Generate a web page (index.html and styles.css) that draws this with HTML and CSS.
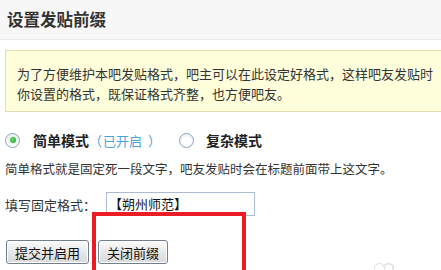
FILE: index.html
```html
<!DOCTYPE html>
<html lang="zh-CN">
<head>
<meta charset="utf-8">
<title>设置发贴前缀</title>
<link rel="stylesheet" href="styles.css">
</head>
<body>
<div class="page">
  <div class="header">设置发贴前缀</div>
  <div class="notice">
    <p>为了方便维护本吧发贴格式，吧主可以在此设定好格式，这样吧友发贴时</p>
    <p>你设置的格式，既保证格式齐整，也方便吧友。</p>
  </div>
  <div class="modes">
    <span class="radio checked"></span>
    <span class="mode-name">简单模式</span><span class="status"><span class="paren-l">（</span>已开启<span class="paren-r">）</span></span>
    <span class="radio second"></span>
    <span class="mode-name">复杂模式</span>
  </div>
  <div class="desc">简单格式就是固定死一段文字，吧友发贴时会在标题前面带上这文字。</div>
  <div class="field">
    <span class="label">填写固定格式：</span>
    <div class="input">【朔州师范】</div>
  </div>
  <div class="buttons">
    <button class="btn btn-submit">提交并启用</button>
    <button class="btn btn-close">关闭前缀</button>
  </div>
  <div class="highlight"></div>
  <div class="watermark"></div>
</div>
</body>
</html>
```
FILE: styles.css
```css
html, body {
  margin: 0;
  padding: 0;
  background: #ffffff;
  overflow: hidden;
}
.page {
  position: relative;
  width: 441px;
  height: 270px;
  overflow: hidden;
  font-family: "Noto Sans CJK SC", "DejaVu Sans", sans-serif;
  font-size: 12.5px;
  color: #333333;
}
.header {
  height: 39px;
  line-height: 38px;
  background: #f7f7f7;
  border-bottom: 1px solid #ebebeb;
  padding-left: 7px;
  font-size: 16.5px;
  font-weight: bold;
  color: #333333;
}
.notice {
  margin: 10px 0 0 5px;
  width: 600px;
  background: #ffffdc;
  border: 1px solid #e4dcaf;
  padding: 13px 0 7px 11px;
  white-space: nowrap;
  font-size: 13px;
}
.notice p {
  margin: 0;
  line-height: 20px;
}
.modes {
  display: flex;
  align-items: center;
  height: 20px;
  margin-top: 18px;
  padding-left: 5px;
}
.radio {
  position: relative;
  box-sizing: border-box;
  width: 15px;
  height: 15px;
  border-radius: 50%;
  border: 1px solid #8aa3bf;
  background: radial-gradient(circle at 50% 60%, #ffffff 30%, #e3e9f0 100%);
  margin-right: 13px;
}
.radio.checked::after {
  content: "";
  position: absolute;
  left: 3.5px;
  top: 3.5px;
  width: 6px;
  height: 6px;
  border-radius: 50%;
  background: radial-gradient(circle at 40% 40%, #6fd86f, #1f9a2e);
  box-shadow: 0 0 2px #7bcf7b;
}
.radio.second {
  margin-left: 18px;
  margin-right: 12px;
}
.mode-name {
  font-weight: bold;
  font-size: 14px;
  color: #222222;
}
.status {
  display: flex;
  align-items: center;
  color: #4aa3d8;
  font-size: 13px;
}
.paren-l {
  margin-right: 1px;
}
.paren-r {
  margin-left: 6px;
}
.desc {
  margin-top: 9px;
  padding-left: 5px;
  line-height: 20px;
}
.field {
  display: flex;
  align-items: center;
  margin-top: 13px;
  padding-left: 5px;
}
.label {
  width: 101px;
  font-size: 13px;
}
.input {
  box-sizing: border-box;
  width: 149px;
  height: 24px;
  line-height: 22px;
  border: 1px solid #a9bcd3;
  padding-left: 2px;
  font-size: 13px;
  color: #111111;
  background: #ffffff;
}
.buttons {
  display: flex;
  gap: 9px;
  margin-top: 24px;
  padding-left: 6px;
}
.btn {
  box-sizing: border-box;
  height: 24px;
  padding: 0 4px;
  font-family: "Noto Sans CJK SC", "DejaVu Sans", sans-serif;
  font-size: 13px;
  color: #111111;
  border: 1px solid #6f7f90;
  border-radius: 3px;
  background: linear-gradient(#fbfbfb, #e6e6e6 55%, #d9d9d9);
  box-shadow: inset 0 0 0 1px #ffffff;
}
.btn-submit {
  width: 83px;
}
.btn-close {
  width: 70px;
}
.highlight {
  position: absolute;
  left: 92px;
  top: 212px;
  width: 154px;
  height: 90px;
  box-sizing: border-box;
  border: 4px solid #ec1c24;
}
.watermark {
  position: absolute;
  left: 374px;
  top: 263px;
  width: 9px;
  height: 9px;
  border-radius: 50%;
  border: 1.5px solid #dddddd;
  box-shadow: 9px 0 0 -1.5px #ffffff, 9px 0 0 0 #dddddd;
}
```
